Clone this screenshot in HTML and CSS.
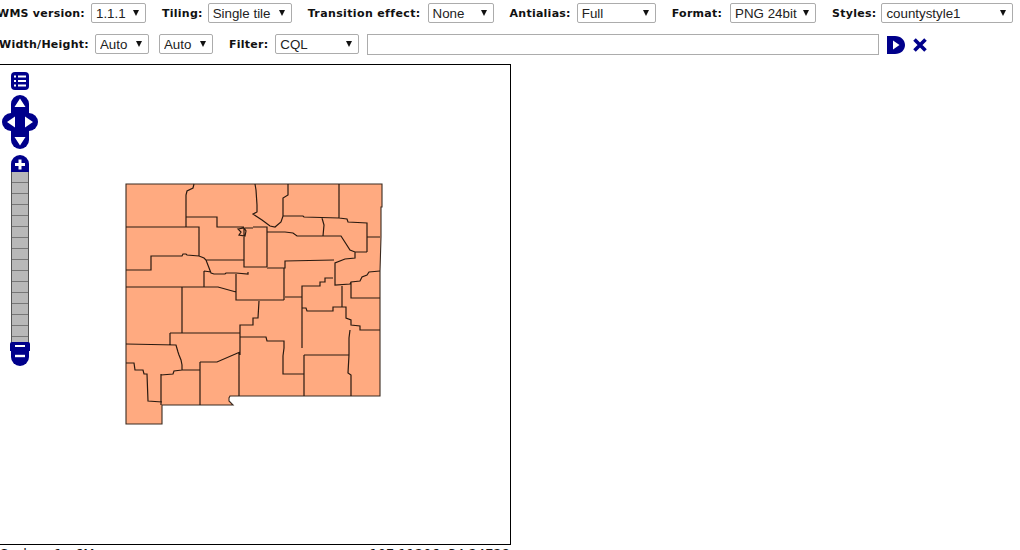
FILE: index.html
```html
<!DOCTYPE html>
<html lang="en">
<head>
<meta charset="utf-8">
<title>WMS preview</title>
<link rel="stylesheet" href="styles.css">
</head>
<body>
<form class="toolbar">
  <div class="row row-one">
    <label class="field f-wms"><span class="lbl">WMS version:</span><span class="sel w-55"><select><option>1.1.1</option></select></span></label>
    <label class="field f-tiling"><span class="lbl">Tiling:</span><span class="sel w-84"><select><option>Single tile</option></select></span></label>
    <label class="field f-trans"><span class="lbl">Transition effect:</span><span class="sel w-66"><select><option>None</option></select></span></label>
    <label class="field f-anti"><span class="lbl">Antialias:</span><span class="sel w-79"><select><option>Full</option></select></span></label>
    <label class="field f-format"><span class="lbl">Format:</span><span class="sel w-86"><select><option>PNG 24bit</option></select></span></label>
    <label class="field f-styles"><span class="lbl">Styles:</span><span class="sel w-132"><select><option>countystyle1</option></select></span></label>
  </div>
  <div class="row row-two">
    <label class="field f-size"><span class="lbl">Width/Height:</span><span class="sel w-54"><select><option>Auto</option></select></span></label>
    <span class="sel w-54 f-auto"><select><option>Auto</option></select></span>
    <label class="field f-filter"><span class="lbl">Filter:</span><span class="sel w-84"><select><option>CQL</option></select></span></label>
    <input class="cql" type="text">
    <svg class="apply" width="18" height="18" viewBox="0 0 18 18"><path fill="#00008b" fill-rule="evenodd" d="M0 0H8C14 0 18 4 18 9S14 18 8 18H0ZM6 4.5V13.5L12.5 9Z"/></svg>
    <svg class="reset" width="14" height="14" viewBox="0 0 14 14"><path stroke="#00008b" stroke-width="3.6" d="M1.5 1.5 12.5 12.5M12.5 1.5 1.5 12.5"/></svg>
  </div>
</form>

<div class="map">
  <svg class="counties" width="510" height="479" viewBox="0 0 510 479">
    <g transform="translate(0 -65)">
      <path class="state" d="M126 184H382V207H381V237L380 271V329L380 396H239L230 396 229 398 229 401 233 405H162V424H126Z"/>
      <path class="lines" d="
      M194 184 193 188 187 191 186 195V227
      M126 227H199V256
      M186 217H217V227H244
      M126 270H151V256H182L183 254H186L187 255 199 256 204 258 206 260 211 273 214 274H225L226 273H236L248 274V272
      M206 260H244
      M244 228V267H267
      M204 271V287
      M204 271 211 272
      M126 287H218L236 292
      M236 274V300H284
      M182 287V333
      M170 333H240V325H253V318H258L259 301
      M240 337H266L267 341H284V348L283 356V374H304
      M240 325V355
      M239 353V396
      M170 333V345
      M126 344 176 345 178 352 179 355 181 360 182 365 182 370H200
      M200 362V405
      M200 362H217L240 352
      M126 363H134L135 370H143L144 374H147L148 401 162 402
      M161 374V405
      M161 375 173 374 174 371 182 370
      M255 184 256 190 257 205V212L253 214 262 220 270 226 275 227 281 222 283 216H303L304 217 339 218L347 219 348 222 367 223V252
      M288 184V195L283 198V216
      M339 184V218
      M367 237H380
      M322 218 324 225 323 236H341L350 250 355 252H367
      M355 252V258L345 259 335 263V285L350 284 351 282 360 281 362 277 367 275 369 272 380 271
      M351 282V298H380
      M253 227H267V267
      M245 228H253
      M267 232H285L293 233 297 236H323
      M267 268H285V261L334 260
      M284 268V300
      M285 297H302
      M333 278H325V282H320V286H302V348
      M342 286V307L333 307V311H307L306 308H302
      M342 307H346V318L351 320V325L360 326V330H380
      M350 330 349 338V355L348 373 351 375V396
      M304 355H349
      M304 355V396
      M238 229 244 228 246 231 245 236 239 235 241 232Z
      "/>
    </g>
  </svg>

  <div class="controls">
    <svg class="ctl-menu" width="18" height="18" viewBox="0 0 18 18">
      <rect width="18" height="18" rx="4" fill="#00008b"/>
      <path stroke="#fff" stroke-width="2" d="M3 4.5H5M7 4.5H15M3 9H5M7 9H15M3 13.5H5M7 13.5H15"/>
    </svg>
    <svg class="ctl-pan" width="36" height="54" viewBox="0 0 36 54">
      <rect x="9" y="0" width="18" height="54" rx="9" fill="#00008b"/>
      <rect x="0" y="18" width="36" height="18" rx="9" fill="#00008b"/>
      <path fill="#fff" d="M18 3.500 23.500 12H12.500ZM18 50.500 23.500 42H12.500ZM5 27 13 21.500V32.500ZM31 27 23 21.500V32.500Z"/>
    </svg>
    <div class="zoombar">
      <svg class="zoom-plus" width="18" height="18" viewBox="0 0 18 18">
        <path fill="#00008b" d="M0 18V9A9 9 0 0 1 18 9V18Z"/>
        <path stroke="#fff" stroke-width="3" d="M4 9.500H14M9 4.500V14.500"/>
      </svg>
      <div class="zoom-track"></div>
      <div class="zoom-handle"></div>
      <svg class="zoom-minus" width="18" height="17" viewBox="0 0 18 17">
        <path fill="#00008b" d="M0 0H18V8A9 9 0 0 1 0 8Z"/>
        <path stroke="#fff" stroke-width="2.400" d="M4 7H14"/>
      </svg>
    </div>
  </div>
</div>

<div class="status">
  <span>Scale = 1 : 6M</span>
  <span>-107.11206, 34.24728</span>
</div>
</body>
</html>
```
FILE: styles.css
```css
html, body {
  margin: 0;
  padding: 0;
  height: 100%;
  overflow: hidden;
  background: #fff;
}

body {
  font-family: "Liberation Sans", Arial, sans-serif;
  color: #000;
}

.toolbar {
  display: flex;
  flex-direction: column;
  height: 64px;
  box-sizing: border-box;
  padding-top: 3px;
}

.row {
  display: flex;
  align-items: center;
  height: 20px;
}

.row-one { margin-left: -3px; }
.row-two { margin-top: 11px; margin-left: -1px; }

.field {
  display: flex;
  align-items: center;
}

.lbl {
  margin-right: 6px;
  font: bold 11px "DejaVu Sans", Verdana, sans-serif;
  letter-spacing: 0.25px;
  white-space: nowrap;
  color: #111;
}

.sel {
  position: relative;
  display: block;
  height: 20px;
  flex: none;
}

.sel::after {
  content: "";
  position: absolute;
  right: 7px;
  top: 7px;
  border-left: 3.5px solid transparent;
  border-right: 3.5px solid transparent;
  border-top: 6px solid #111;
  pointer-events: none;
}

.sel select {
  appearance: none;
  display: block;
  width: 100%;
  height: 100%;
  margin: 0;
  padding: 0 0 0 4px;
  box-sizing: border-box;
  border: 1px solid #acacac;
  border-radius: 2px;
  background: #fff;
  color: #222;
  font: 13.33px "Liberation Sans", Arial, sans-serif;
}

.w-54 { width: 54px; }
.w-55 { width: 55px; }
.w-66 { width: 66px; }
.w-79 { width: 79px; }
.w-84 { width: 84px; }
.w-86 { width: 86px; }
.w-132 { width: 132px; }

.f-tiling { margin-left: 16px; }
.f-tiling .lbl { margin-right: 5px; }
.f-trans { margin-left: 16px; }
.f-trans .lbl { margin-right: 7px; letter-spacing: 0.37px; }
.f-anti { margin-left: 16px; }
.f-format { margin-left: 16px; }
.f-format .lbl { margin-right: 8px; }
.f-styles { margin-left: 16px; }
.f-styles .lbl { margin-right: 5px; }

.f-auto { margin-left: 10px; }
.f-filter { margin-left: 16px; }
.f-filter .lbl { margin-right: 7px; }

.cql {
  flex: none;
  width: 512px;
  height: 21px;
  margin: 1px 0 0 8px;
  padding: 0;
  box-sizing: border-box;
  border: 1px solid #acacac;
  border-radius: 0;
  background: #fff;
}

.apply {
  flex: none;
  margin: 1px 0 0 8px;
}

.reset {
  flex: none;
  margin: 1px 0 0 8px;
}

.map {
  position: relative;
  width: 512px;
  height: 481px;
  margin-left: -1px;
  box-sizing: border-box;
  border: 1px solid #000;
  background: #fff;
}

.counties {
  position: absolute;
  left: 0;
  top: 0;
  display: block;
}

.state {
  fill: #ffaa80;
  stroke: #3a2a20;
  stroke-width: 1.1;
}

.lines {
  fill: none;
  stroke: #2a1a10;
  stroke-width: 1.2;
}

.controls {
  position: absolute;
  top: 1px;
  left: 0;
}

.ctl-menu {
  position: absolute;
  left: 11px;
  top: 6px;
}

.ctl-pan {
  position: absolute;
  left: 2px;
  top: 29px;
}

.zoombar {
  position: absolute;
  left: 11px;
  top: 89px;
  width: 18px;
  height: 211px;
}

.zoom-plus {
  position: absolute;
  left: 0;
  top: 0;
  display: block;
}

.zoom-track {
  position: absolute;
  left: 0;
  top: 17px;
  width: 18px;
  height: 182px;
  box-sizing: border-box;
  border-left: 1px solid #555;
  border-right: 1px solid #555;
  background: repeating-linear-gradient(#b9b9b9 0, #b9b9b9 10px, #777 10px, #777 11px);
}

.zoom-handle {
  position: absolute;
  left: -1px;
  top: 187px;
  width: 20px;
  height: 9px;
  box-sizing: border-box;
  border-radius: 2px 2px 0 0;
  background: #00008b;
}

.zoom-handle::after {
  content: "";
  display: block;
  height: 2px;
  margin: 3px 5px 0;
  background: #fff;
}

.zoom-minus {
  position: absolute;
  left: 0;
  top: 194px;
  display: block;
}

.status {
  display: flex;
  justify-content: space-between;
  width: 510px;
  margin-top: 1px;
  font: 13px/16px "DejaVu Sans", Verdana, sans-serif;
  color: #111;
  white-space: nowrap;
}
```
